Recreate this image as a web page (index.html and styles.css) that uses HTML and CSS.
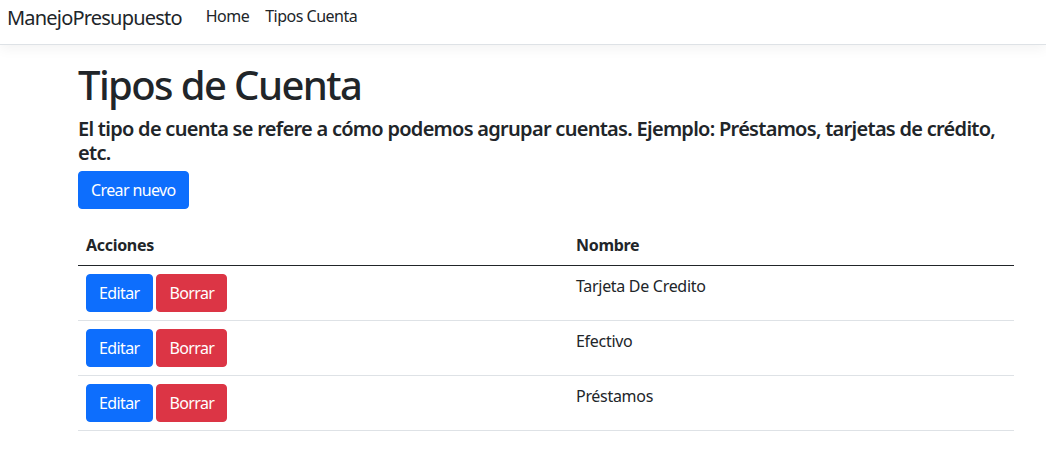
FILE: index.html
```html
<!DOCTYPE html>
<html lang="es">
<head>
<meta charset="utf-8">
<title>Tipos de Cuenta - ManejoPresupuesto</title>
<link rel="stylesheet" href="styles.css">
</head>
<body>
<header class="site-header">
  <nav class="navbar">
    <a class="brand" href="#">ManejoPresupuesto</a>
    <ul class="nav-links">
      <li><a href="#">Home</a></li>
      <li><a href="#">Tipos Cuenta</a></li>
    </ul>
  </nav>
</header>
<div class="container">
  <main class="main">
    <h1 class="title">Tipos de Cuenta</h1>
    <h5 class="subtitle">El tipo de cuenta se refere a cómo podemos agrupar cuentas. Ejemplo: Préstamos, tarjetas de crédito, etc.</h5>
    <div class="actions-bar">
      <a class="btn btn-primary" href="#">Crear nuevo</a>
    </div>
    <table class="table">
      <thead>
        <tr>
          <th class="col-actions">Acciones</th>
          <th>Nombre</th>
        </tr>
      </thead>
      <tbody>
        <tr>
          <td><a class="btn btn-primary" href="#">Editar</a> <a class="btn btn-danger" href="#">Borrar</a></td>
          <td>Tarjeta De Credito</td>
        </tr>
        <tr>
          <td><a class="btn btn-primary" href="#">Editar</a> <a class="btn btn-danger" href="#">Borrar</a></td>
          <td>Efectivo</td>
        </tr>
        <tr>
          <td><a class="btn btn-primary" href="#">Editar</a> <a class="btn btn-danger" href="#">Borrar</a></td>
          <td>Préstamos</td>
        </tr>
      </tbody>
    </table>
  </main>
</div>
</body>
</html>
```
FILE: styles.css
```css
* { box-sizing: border-box; }
html, body { margin: 0; padding: 0; }
body {
  font-family: "Noto Sans", "Open Sans", sans-serif;
  font-size: 16px;
  line-height: 1.5;
  color: #212529;
  background: #fff;
}
a { text-decoration: none; }

.site-header { margin-bottom: 16px; }
.navbar {
  display: flex;
  align-items: center;
  height: 45px;
  padding: 0 7px;
  background: #fff;
  border-bottom: 1px solid #dee2e6;
  box-shadow: 0 4px 12px rgba(0, 0, 0, 0.05);
}
.brand {
  font-size: 20px;
  color: #212529;
  margin-right: 16px;
  line-height: 30px;
  padding-bottom: 8px;
  letter-spacing: -0.8px;
}
.nav-links {
  display: flex;
  list-style: none;
  margin: 0;
  padding: 0;
  padding-bottom: 12px;
}
.nav-links a {
  display: block;
  padding: 0 8px;
  color: #212529;
  font-size: 16px;
  line-height: 24px;
  letter-spacing: -0.5px;
}

.container {
  width: 960px;
  margin-left: 66px;
  padding: 0 12px;
}
.main { padding-bottom: 16px; }

.title {
  margin: 0 0 8px;
  font-size: 40px;
  font-weight: 500;
  line-height: 1.2;
  letter-spacing: -1.6px;
}
.subtitle {
  margin: 0 0 6px;
  font-size: 20px;
  font-weight: 600;
  line-height: 1.2;
  letter-spacing: -0.72px;
}
.actions-bar { margin-bottom: 16px; }

.btn {
  display: inline-block;
  padding: 6px 12px;
  font-size: 16px;
  line-height: 24px;
  border: 1px solid transparent;
  border-radius: 4px;
  color: #fff;
  letter-spacing: -0.62px;
  vertical-align: middle;
}
.btn-primary { background: #0d6efd; border-color: #0d6efd; }
.btn-danger { background: #dc3545; border-color: #dc3545; }

.table {
  width: 100%;
  border-collapse: collapse;
  margin-bottom: 16px;
}
.table th, .table td {
  padding: 8px;
  text-align: left;
  vertical-align: top;
  border-bottom: 1px solid #dee2e6;
  letter-spacing: -0.3px;
}
.table th { font-weight: 700; border-bottom: 1px solid #212529; }
.table td { font-size: 16px; }
.col-actions { width: 490px; }
```
